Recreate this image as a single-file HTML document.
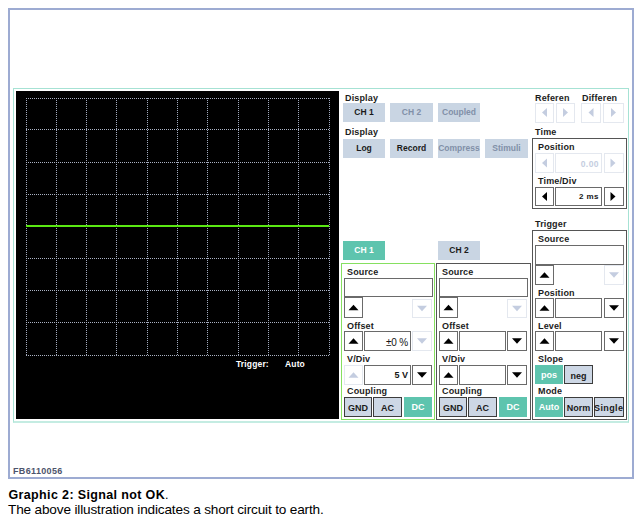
<!DOCTYPE html>
<html><head><meta charset="utf-8"><style>
html,body{margin:0;padding:0;background:#fff;width:639px;height:524px;overflow:hidden;}
body{position:relative;font-family:"Liberation Sans",sans-serif;}
.a{position:absolute;box-sizing:border-box;}
.l{position:absolute;font-size:9px;font-weight:bold;color:#1c1c1c;line-height:10px;white-space:nowrap;letter-spacing:0.15px;}
.b{position:absolute;box-sizing:border-box;background:#c9d5e3;font-size:8.5px;font-weight:bold;color:#1a1a1a;text-align:center;white-space:nowrap;}
.d{color:#8190a8;}
.t{background:#5ec4ae;color:#fff;}
.k{border:1px solid #3c3c3c;background:#cdd7e5;}
.x{position:absolute;box-sizing:border-box;border:1px solid #6a6a6a;background:#fff;}
.y{position:absolute;box-sizing:border-box;border:1px solid #e4e8ef;background:#fff;}
.v{position:absolute;font-size:9px;font-weight:bold;color:#151515;text-align:right;white-space:nowrap;line-height:10px;}
</style></head><body>
<div class="a" style="left:8px;top:8px;width:626px;height:471px;border:2px solid #9dabd2;"></div>
<div class="a" style="left:13px;top:88px;width:616px;height:335px;border:1px solid #a6e2d4;border-bottom:2px solid #c4ece2;"></div>
<div class="a" style="left:16px;top:91px;width:323px;height:328px;background:#000;"></div>
<div class="l" style="left:236px;top:359px;font-size:8.5px;color:#fff;">Trigger:</div>
<div class="l" style="left:285px;top:359px;font-size:8.5px;color:#fff;">Auto</div>
<div class="l" style="left:345px;top:93.33px;font-size:9px;line-height:10px;">Display</div>
<div class="b " style="left:343px;top:103px;width:42px;height:19px;line-height:19px;font-size:8.5px;">CH 1</div>
<div class="b d" style="left:390px;top:103px;width:43px;height:19px;line-height:19px;font-size:8.5px;">CH 2</div>
<div class="b d" style="left:438px;top:103px;width:42px;height:19px;line-height:19px;font-size:8.5px;">Coupled</div>
<div class="l" style="left:345px;top:127.33px;font-size:9px;line-height:10px;">Display</div>
<div class="b " style="left:343px;top:139px;width:42px;height:19px;line-height:19px;font-size:8.5px;">Log</div>
<div class="b " style="left:390px;top:139px;width:43px;height:19px;line-height:19px;font-size:8.5px;">Record</div>
<div class="b d" style="left:438px;top:139px;width:42px;height:19px;line-height:19px;font-size:8.5px;">Compress</div>
<div class="b d" style="left:485px;top:139px;width:43px;height:19px;line-height:19px;font-size:8.5px;">Stimuli</div>
<div class="l" style="left:535px;top:93.33px;font-size:9px;line-height:10px;">Referen</div>
<div class="l" style="left:582px;top:93.33px;font-size:9px;line-height:10px;">Differen</div>
<div class="y" style="left:535px;top:103px;width:19px;height:20px;"></div>
<div class="y" style="left:556px;top:103px;width:19px;height:20px;"></div>
<div class="y" style="left:581px;top:103px;width:20px;height:20px;"></div>
<div class="y" style="left:603px;top:103px;width:21px;height:20px;"></div>
<div class="l" style="left:535px;top:127.33px;font-size:9px;line-height:10px;">Time</div>
<div class="a" style="left:532px;top:138px;width:95px;height:71px;border:1px solid #555;"></div>
<div class="l" style="left:538px;top:142.33px;font-size:9px;line-height:10px;">Position</div>
<div class="y" style="left:535px;top:153px;width:19px;height:20px;"></div>
<div class="y" style="left:555px;top:153px;width:47px;height:20px;"></div>
<div class="v" style="left:555px;top:158.5px;width:44px;color:#c4cde0;font-size:8.5px;letter-spacing:0.45px;">0.00</div>
<div class="y" style="left:604px;top:153px;width:20px;height:20px;"></div>
<div class="l" style="left:538px;top:176.33px;font-size:9px;line-height:10px;">Time/Div</div>
<div class="x" style="left:535px;top:187px;width:19px;height:19px;"></div>
<div class="x" style="left:555px;top:187px;width:47px;height:19px;"></div>
<div class="v" style="left:555px;top:192px;width:44px;font-size:8px;letter-spacing:0.45px;">2 ms</div>
<div class="x" style="left:604px;top:187px;width:20px;height:19px;"></div>
<div class="l" style="left:535px;top:219.33px;font-size:9px;line-height:10px;">Trigger</div>
<div class="a" style="left:532px;top:230px;width:95px;height:190px;border:1px solid #555;"></div>
<div class="l" style="left:538px;top:233.83px;font-size:9px;line-height:10px;">Source</div>
<div class="x" style="left:535px;top:245px;width:89px;height:20px;"></div>
<div class="x" style="left:535px;top:265px;width:19px;height:20px;"></div>
<div class="y" style="left:604px;top:265px;width:20px;height:20px;"></div>
<div class="l" style="left:538px;top:288.33px;font-size:9px;line-height:10px;">Position</div>
<div class="x" style="left:535px;top:298px;width:19px;height:20px;"></div>
<div class="x" style="left:555px;top:298px;width:47px;height:20px;"></div>
<div class="x" style="left:604px;top:298px;width:20px;height:20px;"></div>
<div class="l" style="left:538px;top:321.33px;font-size:9px;line-height:10px;">Level</div>
<div class="x" style="left:535px;top:331px;width:19px;height:20px;"></div>
<div class="x" style="left:555px;top:331px;width:47px;height:20px;"></div>
<div class="x" style="left:604px;top:331px;width:20px;height:20px;"></div>
<div class="l" style="left:538px;top:354.33px;font-size:9px;line-height:10px;">Slope</div>
<div class="b t" style="left:535px;top:365px;width:28px;height:19px;line-height:20.6px;font-size:9px;">pos</div>
<div class="b k" style="left:564px;top:365px;width:29px;height:19px;line-height:20.0px;font-size:9px;">neg</div>
<div class="l" style="left:538px;top:386.33px;font-size:9px;line-height:10px;">Mode</div>
<div class="b t" style="left:535px;top:397px;width:28px;height:20px;line-height:21.0px;font-size:9px;">Auto</div>
<div class="b k" style="left:564px;top:397px;width:29px;height:20px;line-height:20px;font-size:9px;">Norm</div>
<div class="b k" style="left:594px;top:397px;width:30px;height:20px;line-height:20px;font-size:9px;"><span style="letter-spacing:0.4px;margin-left:-1px">Single</span></div>
<div class="b t" style="left:343px;top:241px;width:42px;height:19px;line-height:19px;font-size:8.5px;">CH 1</div>
<div class="a" style="left:341px;top:263px;width:94px;height:157px;border:1px solid #86e060;"></div>
<div class="l" style="left:347px;top:267.33px;font-size:9px;line-height:10px;">Source</div>
<div class="x" style="left:344px;top:278px;width:89px;height:19px;"></div>
<div class="x" style="left:344px;top:297px;width:19px;height:21px;"></div>
<div class="y" style="left:412px;top:299px;width:20px;height:19px;"></div>
<div class="l" style="left:347px;top:321.33px;font-size:9px;line-height:10px;">Offset</div>
<div class="x" style="left:344px;top:331px;width:19px;height:20px;"></div>
<div class="x" style="left:364px;top:331px;width:47px;height:20px;"></div>
<div class="v" style="left:364px;top:337.5px;width:44px;font-size:10px;font-weight:normal;letter-spacing:-0.2px;">&plusmn;0 %</div>
<div class="y" style="left:412px;top:331px;width:20px;height:20px;"></div>
<div class="l" style="left:347px;top:354.33px;font-size:9px;line-height:10px;">V/Div</div>
<div class="y" style="left:344px;top:365px;width:19px;height:20px;"></div>
<div class="x" style="left:364px;top:365px;width:47px;height:20px;"></div>
<div class="v" style="left:364px;top:370px;width:44px;">5 V</div>
<div class="x" style="left:412px;top:365px;width:20px;height:20px;"></div>
<div class="l" style="left:347px;top:386.33px;font-size:9px;line-height:10px;">Coupling</div>
<div class="b k" style="left:344px;top:397px;width:28px;height:20px;line-height:20px;font-size:9px;">GND</div>
<div class="b k" style="left:373px;top:397px;width:29px;height:20px;line-height:20px;font-size:9px;">AC</div>
<div class="b t" style="left:404px;top:397px;width:28px;height:20px;line-height:20px;font-size:9px;">DC</div>
<div class="b " style="left:438px;top:241px;width:42px;height:19px;line-height:19px;font-size:8.5px;">CH 2</div>
<div class="a" style="left:436px;top:263px;width:95px;height:157px;border:1px solid #555;"></div>
<div class="l" style="left:442px;top:267.33px;font-size:9px;line-height:10px;">Source</div>
<div class="x" style="left:439px;top:278px;width:89px;height:19px;"></div>
<div class="x" style="left:439px;top:297px;width:19px;height:21px;"></div>
<div class="y" style="left:507px;top:299px;width:20px;height:19px;"></div>
<div class="l" style="left:442px;top:321.33px;font-size:9px;line-height:10px;">Offset</div>
<div class="x" style="left:439px;top:331px;width:19px;height:20px;"></div>
<div class="x" style="left:459px;top:331px;width:47px;height:20px;"></div>
<div class="x" style="left:507px;top:331px;width:20px;height:20px;"></div>
<div class="l" style="left:442px;top:354.33px;font-size:9px;line-height:10px;">V/Div</div>
<div class="x" style="left:439px;top:365px;width:19px;height:20px;"></div>
<div class="x" style="left:459px;top:365px;width:47px;height:20px;"></div>
<div class="x" style="left:507px;top:365px;width:20px;height:20px;"></div>
<div class="l" style="left:442px;top:386.33px;font-size:9px;line-height:10px;">Coupling</div>
<div class="b k" style="left:439px;top:397px;width:28px;height:20px;line-height:20px;font-size:9px;">GND</div>
<div class="b k" style="left:468px;top:397px;width:29px;height:20px;line-height:20px;font-size:9px;">AC</div>
<div class="b t" style="left:499px;top:397px;width:28px;height:20px;line-height:20px;font-size:9px;">DC</div>
<div class="l" style="left:13px;top:466.33px;font-size:9px;line-height:10px;color:#4d546c;letter-spacing:0.35px;">FB6110056</div>
<div class="l" style="left:8.5px;top:489.47px;font-size:12.5px;line-height:13.5px;color:#000;letter-spacing:0.36px;">Graphic 2: Signal not OK<span style="font-weight:normal">.</span></div>
<div class="l" style="left:8px;top:503.33px;font-size:13.6px;line-height:14.6px;color:#000;font-weight:normal;letter-spacing:-0.16px;">The above illustration indicates a short circuit to earth.</div>
<svg class="a" style="left:0;top:0;position:absolute;" width="639" height="524"><line x1="26.5" y1="98" x2="26.5" y2="356" stroke="#a0a8bc" stroke-width="1" stroke-dasharray="1 1"/><line x1="56.5" y1="98" x2="56.5" y2="356" stroke="#a0a8bc" stroke-width="1" stroke-dasharray="1 1"/><line x1="86.5" y1="98" x2="86.5" y2="356" stroke="#a0a8bc" stroke-width="1" stroke-dasharray="1 1"/><line x1="116.5" y1="98" x2="116.5" y2="356" stroke="#a0a8bc" stroke-width="1" stroke-dasharray="1 1"/><line x1="147.5" y1="98" x2="147.5" y2="356" stroke="#a0a8bc" stroke-width="1" stroke-dasharray="1 1"/><line x1="177.5" y1="98" x2="177.5" y2="356" stroke="#a0a8bc" stroke-width="1" stroke-dasharray="1 1"/><line x1="207.5" y1="98" x2="207.5" y2="356" stroke="#a0a8bc" stroke-width="1" stroke-dasharray="1 1"/><line x1="238.5" y1="98" x2="238.5" y2="356" stroke="#a0a8bc" stroke-width="1" stroke-dasharray="1 1"/><line x1="268.5" y1="98" x2="268.5" y2="356" stroke="#a0a8bc" stroke-width="1" stroke-dasharray="1 1"/><line x1="298.5" y1="98" x2="298.5" y2="356" stroke="#a0a8bc" stroke-width="1" stroke-dasharray="1 1"/><line x1="329.5" y1="98" x2="329.5" y2="356" stroke="#a0a8bc" stroke-width="1" stroke-dasharray="1 1"/><line x1="26" y1="98.5" x2="330" y2="98.5" stroke="#aab2c4" stroke-width="1" stroke-dasharray="1 1"/><line x1="26" y1="129.5" x2="330" y2="129.5" stroke="#aab2c4" stroke-width="1" stroke-dasharray="1 1"/><line x1="26" y1="162.5" x2="330" y2="162.5" stroke="#aab2c4" stroke-width="1" stroke-dasharray="1 1"/><line x1="26" y1="194.5" x2="330" y2="194.5" stroke="#aab2c4" stroke-width="1" stroke-dasharray="1 1"/><line x1="26" y1="226.5" x2="330" y2="226.5" stroke="#aab2c4" stroke-width="1" stroke-dasharray="1 1"/><line x1="26" y1="258.5" x2="330" y2="258.5" stroke="#aab2c4" stroke-width="1" stroke-dasharray="1 1"/><line x1="26" y1="290.5" x2="330" y2="290.5" stroke="#aab2c4" stroke-width="1" stroke-dasharray="1 1"/><line x1="26" y1="322.5" x2="330" y2="322.5" stroke="#aab2c4" stroke-width="1" stroke-dasharray="1 1"/><line x1="26" y1="355.5" x2="330" y2="355.5" stroke="#aab2c4" stroke-width="1" stroke-dasharray="1 1"/><rect x="26" y="225" width="303" height="2" fill="#5ae812"/><polygon points="547.0,108.0 547.0,117.0 542.0,112.5" fill="#c4cde0"/><polygon points="563.0,108.0 563.0,117.0 568.0,112.5" fill="#c4cde0"/><polygon points="593.5,108.0 593.5,117.0 588.5,112.5" fill="#c4cde0"/><polygon points="611.0,108.0 611.0,117.0 616.0,112.5" fill="#c4cde0"/><polygon points="547.0,158.5 547.0,167.5 542.0,163" fill="#c4cde0"/><polygon points="610.5,158.5 610.5,167.5 615.5,163" fill="#c4cde0"/><polygon points="547.0,192.0 547.0,201.0 542.0,196.5" fill="#000"/><polygon points="610.5,192.0 610.5,201.0 615.5,196.5" fill="#000"/><polygon points="539.5,277.75 549.5,277.75 544.5,272.25" fill="#000"/><polygon points="609.0,272.25 619.0,272.25 614,277.75" fill="#c4cde0"/><polygon points="539.5,310.75 549.5,310.75 544.5,305.25" fill="#000"/><polygon points="609.0,305.25 619.0,305.25 614,310.75" fill="#000"/><polygon points="539.5,343.75 549.5,343.75 544.5,338.25" fill="#000"/><polygon points="609.0,338.25 619.0,338.25 614,343.75" fill="#000"/><polygon points="348.5,310.25 358.5,310.25 353.5,304.75" fill="#000"/><polygon points="417.0,305.75 427.0,305.75 422,311.25" fill="#c4cde0"/><polygon points="348.5,343.75 358.5,343.75 353.5,338.25" fill="#000"/><polygon points="417.0,338.25 427.0,338.25 422,343.75" fill="#c4cde0"/><polygon points="348.5,377.75 358.5,377.75 353.5,372.25" fill="#c4cde0"/><polygon points="417.0,372.25 427.0,372.25 422,377.75" fill="#000"/><polygon points="443.5,310.25 453.5,310.25 448.5,304.75" fill="#000"/><polygon points="512.0,305.75 522.0,305.75 517,311.25" fill="#c4cde0"/><polygon points="443.5,343.75 453.5,343.75 448.5,338.25" fill="#000"/><polygon points="512.0,338.25 522.0,338.25 517,343.75" fill="#000"/><polygon points="443.5,377.75 453.5,377.75 448.5,372.25" fill="#000"/><polygon points="512.0,372.25 522.0,372.25 517,377.75" fill="#000"/></svg>
</body></html>
